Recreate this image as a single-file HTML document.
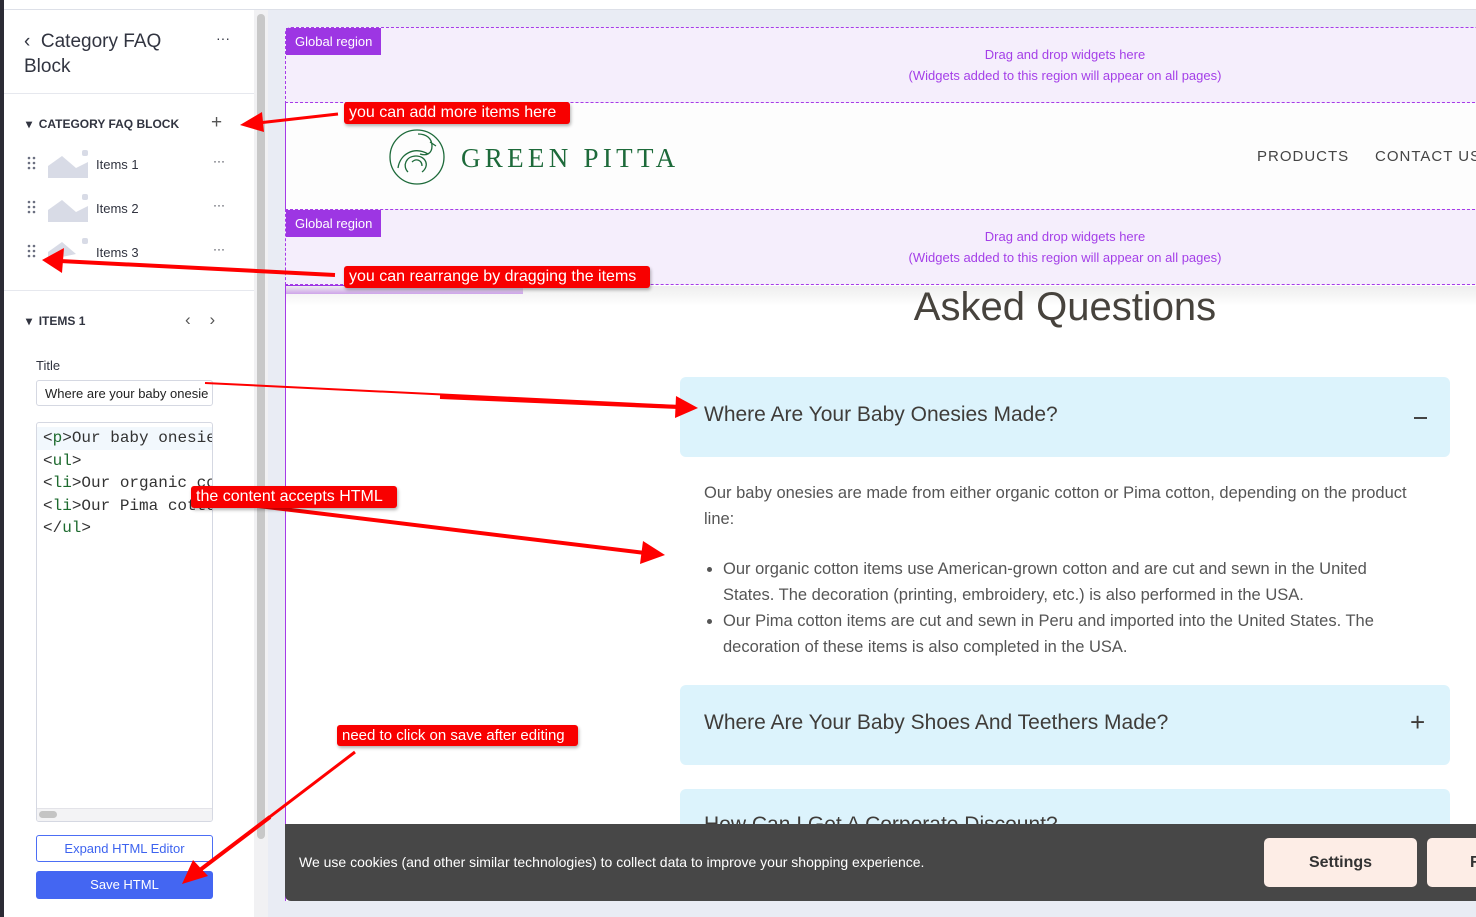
<!DOCTYPE html>
<html><head><meta charset="utf-8"><style>
*{box-sizing:border-box;margin:0;padding:0}
body{width:1476px;height:917px;overflow:hidden;background:#e9ecf4;font-family:"Liberation Sans",sans-serif;position:relative}
.abs{position:absolute}
.side{left:4px;top:10px;width:250px;height:907px;background:#fff}
.strip{left:0;top:0;width:4px;height:917px;background:#2b2b35}
.topbar{left:0;top:0;width:1476px;height:10px;background:#fff;border-bottom:1px solid #dde0e8}
.t{color:#313440}
.gr{background:#f5eefc;border:1px dashed #a63be8;left:285px;width:1200px}
.lab{background:#9d36e3;color:#fff;font-size:13px;padding:6px 9px;left:286px}
.drag{color:#a43fe8;font-size:13px;text-align:center;left:665px;width:800px;line-height:21px}
.faq{background:#dcf3fc;border-radius:6px;left:680px;width:770px;color:#3f3c39;font-size:21px}
.note{background:#f80000;color:#fff;font-size:16px;padding:2px 5px;border-radius:3px;box-shadow:1px 2px 3px rgba(0,0,0,.3)}
.code{font-family:"Liberation Mono",monospace;font-size:16px;color:#333;line-height:22.5px;white-space:pre}
.g{color:#1e6b2f}
</style></head><body>
<div class="abs topbar"></div>
<div class="abs strip"></div>
<div class="abs side"></div>
<div class="abs" style="left:254px;top:10px;width:14px;height:907px;background:#f1f1f3"></div>
<div class="abs" style="left:257px;top:14px;width:8px;height:825px;background:#c8c8c8;border-radius:4px"></div>
<div class="abs t" style="left:24px;top:29px;font-size:19px;line-height:25px">‹&nbsp; Category FAQ<br>Block</div>
<div class="abs t" style="left:216px;top:30px;font-size:14px">···</div>
<div class="abs" style="left:4px;top:93px;width:250px;height:1px;background:#e6e8ee"></div>
<div class="abs t" style="left:26px;top:117px;font-size:12px;font-weight:bold">▾&nbsp; CATEGORY FAQ BLOCK</div>
<div class="abs t" style="left:211px;top:112px;font-size:19px;color:#555">+</div>
<svg class="abs" style="left:26px;top:148px" width="64" height="120">
<g fill="#6b6f80"><circle cx="3" cy="10" r="1.3"/><circle cx="8" cy="10" r="1.3"/><circle cx="3" cy="15" r="1.3"/><circle cx="8" cy="15" r="1.3"/><circle cx="3" cy="20" r="1.3"/><circle cx="8" cy="20" r="1.3"/>
<circle cx="3" cy="54" r="1.3"/><circle cx="8" cy="54" r="1.3"/><circle cx="3" cy="59" r="1.3"/><circle cx="8" cy="59" r="1.3"/><circle cx="3" cy="64" r="1.3"/><circle cx="8" cy="64" r="1.3"/>
<circle cx="3" cy="98" r="1.3"/><circle cx="8" cy="98" r="1.3"/><circle cx="3" cy="103" r="1.3"/><circle cx="8" cy="103" r="1.3"/><circle cx="3" cy="108" r="1.3"/><circle cx="8" cy="108" r="1.3"/></g>
<g fill="#d8dbe6"><path d="M22 30V18l14-10 14 12 12-6v16z"/><rect x="56" y="2" width="6" height="6" rx="2"/>
<path d="M22 74V62l14-10 14 12 12-6v16z"/><rect x="56" y="46" width="6" height="6" rx="2"/>
<path d="M22 112V104l14-10 14 12z"/><rect x="56" y="90" width="6" height="6" rx="2"/></g></svg>
<div class="abs t" style="left:96px;top:157px;font-size:13px">Items 1</div>
<div class="abs t" style="left:96px;top:201px;font-size:13px">Items 2</div>
<div class="abs t" style="left:96px;top:245px;font-size:13px">Items 3</div>
<div class="abs t" style="left:213px;top:154px;font-size:12px">···</div>
<div class="abs t" style="left:213px;top:198px;font-size:12px">···</div>
<div class="abs t" style="left:213px;top:242px;font-size:12px">···</div>
<div class="abs" style="left:4px;top:290px;width:250px;height:1px;background:#e6e8ee"></div>
<div class="abs t" style="left:26px;top:314px;font-size:12px;font-weight:bold">▾&nbsp; ITEMS 1</div>
<div class="abs t" style="left:185px;top:310px;font-size:17px;color:#555">‹ &nbsp;&nbsp; ›</div>
<div class="abs t" style="left:36px;top:358px;font-size:13px">Title</div>
<div class="abs" style="left:36px;top:380px;width:177px;height:26px;border:1px solid #d5d8e2;border-radius:3px;font-size:13px;color:#222;padding:5px 8px;overflow:hidden;white-space:nowrap">Where are your baby onesie</div>
<div class="abs" style="left:36px;top:422px;width:177px;height:400px;border:1px solid #d5d8e2;border-radius:3px;overflow:hidden">
<div class="abs" style="left:0;top:4px;width:177px;height:23px;background:#f2f8fd"></div>
<div class="abs code" style="left:6px;top:4px">&lt;<span class="g">p</span>&gt;Our baby onesies
&lt;<span class="g">ul</span>&gt;
&lt;<span class="g">li</span>&gt;Our organic co
&lt;<span class="g">li</span>&gt;Our Pima cotto
&lt;/<span class="g">ul</span>&gt;</div>
<div class="abs" style="left:0;top:385px;width:177px;height:14px;background:#f3f3f5;border-top:1px solid #e3e3e8"></div>
<div class="abs" style="left:2px;top:388px;width:18px;height:7px;background:#c4c4c4;border-radius:4px"></div>
</div>
<div class="abs" style="left:36px;top:835px;width:177px;height:27px;border:1px solid #4c6ef5;border-radius:3px;color:#3d63ef;font-size:13px;text-align:center;line-height:25px">Expand HTML Editor</div>
<div class="abs" style="left:36px;top:871px;width:177px;height:28px;background:#4466f2;border-radius:3px;color:#fff;font-size:13px;text-align:center;line-height:28px">Save HTML</div>

<div class="abs" style="left:285px;top:27px;width:1191px;height:890px;background:#fff;border-radius:6px 0 0 0;border-left:1px solid #a63be8"></div>
<div class="abs gr" style="top:27px;height:76px;border-radius:6px 0 0 0"></div>
<div class="abs lab" style="top:28px">Global region</div>
<div class="abs drag" style="top:44px">Drag and drop widgets here<br>(Widgets added to this region will appear on all pages)</div>
<div class="abs" style="left:286px;top:103px;width:1190px;height:106px;background:#fdfdfd"></div>
<svg class="abs" style="left:388px;top:128px" width="60" height="57"><g fill="none" stroke="#1d6a3a" stroke-width="1.3"><circle cx="29" cy="29" r="27"/><path d="M10 40c2-14 16-22 30-14M20 44c-6-6-2-16 8-16s14 10 6 16M30 6c8 0 14 4 14 12s-6 10-12 8M42 14l6 4M24 34c4-4 10-2 10 4"/></g></svg>
<div class="abs" style="left:461px;top:143px;font-family:'Liberation Serif',serif;font-size:27px;color:#1d6a3a;letter-spacing:4.3px;white-space:nowrap">GREEN PITTA</div>
<div class="abs" style="left:1257px;top:148px;font-size:15px;color:#444;letter-spacing:1px">PRODUCTS</div>
<div class="abs" style="left:1375px;top:148px;font-size:15px;color:#444;letter-spacing:1px;white-space:nowrap">CONTACT US</div>
<div class="abs gr" style="top:209px;height:76px"></div>
<div class="abs lab" style="top:210px">Global region</div>
<div class="abs drag" style="top:226px">Drag and drop widgets here<br>(Widgets added to this region will appear on all pages)</div>
<div class="abs" style="left:286px;top:285px;width:237px;height:9px;background:#9d36e3"></div>
<div class="abs" style="left:286px;top:286px;width:1190px;height:20px;background:linear-gradient(#eee,rgba(255,255,255,0))"></div>
<div class="abs" style="left:665px;top:285px;width:800px;text-align:center;font-size:40px;color:#47433d">Asked Questions</div>
<div class="abs faq" style="top:377px;height:80px"><span class="abs" style="left:24px;top:26px">Where Are Your Baby Onesies Made?</span><span class="abs" style="left:734px;top:40px;width:13px;height:2px;background:#444"></span></div>
<div class="abs" style="left:704px;top:480px;width:715px;font-size:16.5px;color:#555;line-height:26px">Our baby onesies are made from either organic cotton or Pima cotton, depending on the product line:</div>
<ul class="abs" style="left:723px;top:556px;width:670px;font-size:16.5px;color:#555;line-height:26px">
<li>Our organic cotton items use American-grown cotton and are cut and sewn in the United States. The decoration (printing, embroidery, etc.) is also performed in the USA.</li>
<li>Our Pima cotton items are cut and sewn in Peru and imported into the United States. The decoration of these items is also completed in the USA.</li></ul>
<div class="abs faq" style="top:685px;height:80px"><span class="abs" style="left:24px;top:26px">Where Are Your Baby Shoes And Teethers Made?</span><span class="abs" style="left:730px;top:22px;font-size:26px">+</span></div>
<div class="abs faq" style="top:789px;height:60px"><span class="abs" style="left:24px;top:24px">How Can I Get A Corporate Discount?</span></div>
<div class="abs" style="left:285px;top:824px;width:1191px;height:77px;background:#474747;border-radius:0 0 0 6px"></div>
<div class="abs" style="left:285px;top:901px;width:1191px;height:16px;background:#e9ecf4"></div>
<div class="abs" style="left:299px;top:854px;font-size:14px;color:#fff">We use cookies (and other similar technologies) to collect data to improve your shopping experience.</div>
<div class="abs" style="left:1264px;top:838px;width:153px;height:49px;background:#fdede6;border-radius:5px;text-align:center;line-height:49px;font-size:16px;font-weight:bold;color:#333">Settings</div>
<div class="abs" style="left:1427px;top:838px;width:60px;height:49px;background:#fdede6;border-radius:5px;line-height:49px;font-size:16px;font-weight:bold;color:#333;padding-left:43px">R</div>

<svg class="abs" style="left:0;top:0" width="1476" height="917"><g fill="#f00" stroke="#f00">
<line x1="338" y1="114" x2="258" y2="123" stroke-width="3"/><polygon points="240,125 262,112 264,132" stroke="none"/>
<line x1="335" y1="275" x2="60" y2="261" stroke-width="4"/><polygon points="42,260 64,248 62,273" stroke="none"/>
<line x1="205" y1="383" x2="680" y2="406" stroke-width="2"/><line x1="440" y1="397" x2="678" y2="407" stroke-width="4"/><polygon points="698,408 676,396 675,418" stroke="none"/>
<line x1="250" y1="505" x2="645" y2="553" stroke-width="4"/><polygon points="665,555 643,541 640,564" stroke="none"/>
<line x1="355" y1="752" x2="200" y2="870" stroke-width="3"/><line x1="270" y1="817" x2="200" y2="870" stroke-width="4"/><polygon points="182,884 193,860 208,876" stroke="none"/></g></svg>
<div class="abs note" style="left:344px;top:102px">you can add more items here&nbsp;&nbsp;</div>
<div class="abs note" style="left:344px;top:266px">you can rearrange by dragging the items&nbsp;&nbsp;</div>
<div class="abs note" style="left:191px;top:486px">the content accepts HTML&nbsp;&nbsp;</div>
<div class="abs note" style="left:337px;top:725px;font-size:15px">need to click on save after editing&nbsp;&nbsp;</div>
</body></html>
